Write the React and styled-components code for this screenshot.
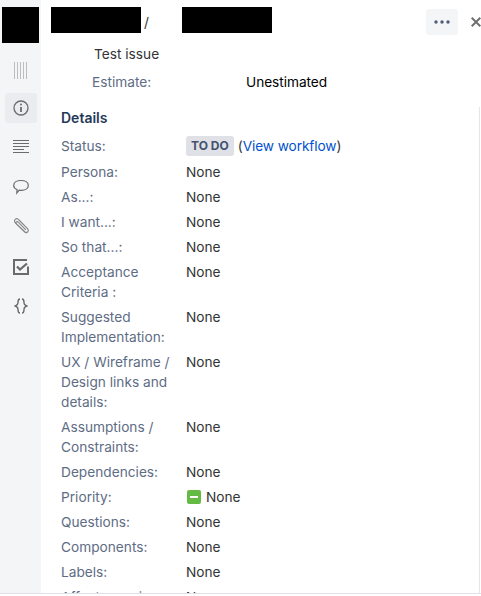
import React from 'react'
import styled, { createGlobalStyle } from 'styled-components'

const Global = createGlobalStyle`
html, body { margin: 0; padding: 0; background: #fff; overflow: hidden; }
body { font-family: Inter, "Liberation Sans", sans-serif; font-size: 13.7px; line-height: 20px; color: #333; }
`

const Frame = styled.div`
display: flex;
width: 481px;
height: 593px;
border-bottom: 1px solid #dfe1e6;
overflow: hidden;
`

const Rail = styled.nav`
width: 41px;
flex: none;
background: #f4f5f7;
display: flex;
flex-direction: column;
align-items: center;
padding-top: 7px;
`

const Logo = styled.div`
width: 37px;
height: 36px;
background: #000;
margin-bottom: 12px;
`

const RailIcon = styled.div`
width: 32px;
height: 30px;
margin-bottom: ${props => props.$gap || 10}px;
border-radius: 3px;
display: flex;
align-items: center;
justify-content: center;
color: #6b6b6b;
background: ${props => props.$active ? '#ebecf0' : 'transparent'};
`

const Main = styled.main`
flex: 1;
min-width: 0;
display: flex;
flex-direction: column;
`

const Header = styled.header`
display: flex;
align-items: flex-start;
padding: 7px 0 0 10px;
height: 37px;
box-sizing: border-box;
flex: none;
`

const Redacted = styled.div`
width: 90px;
height: 26px;
background: #000;
`

const Slash = styled.span`
width: 41px;
padding: 5px 0 0 3px;
box-sizing: border-box;
color: #333;
`

const Actions = styled.div`
margin-left: auto;
display: flex;
align-items: center;
gap: 13px;
margin-top: 2px;
`

const MoreButton = styled.button`
width: 32px;
height: 26px;
border: 0;
padding: 0;
border-radius: 3px;
background: #f4f5f7;
color: #505f79;
display: flex;
align-items: center;
justify-content: center;
`

const CloseButton = styled.button`
width: 10px;
height: 14px;
border: 0;
padding: 0;
background: none;
color: #707070;
display: flex;
align-items: center;
`

const Summary = styled.div`
margin: 7px 0 0 53px;
color: #333;
`

const EstimateRow = styled.div`
display: flex;
margin: 8px 0 0 51px;
`

const EstimateLabel = styled.span`
width: 154px;
color: #5e6c84;
`

const EstimateValue = styled.span`
color: #000;
letter-spacing: -0.05px;
`

const Panel = styled.section`
flex: 1;
min-height: 0;
margin: 15px 1px 0 0;
padding: 1px 0 0 20px;
border-right: 1px solid #e4e6ea;
overflow: hidden;
`

const Heading = styled.h3`
margin: 0 0 8px;
font-size: 14px;
line-height: 20px;
font-weight: 600;
color: #253858;
`

const Row = styled.div`
display: flex;
margin-bottom: ${props => props.$gap ?? 5}px;
`

const Label = styled.div`
width: 125px;
flex: none;
padding-right: 10px;
box-sizing: border-box;
color: #5e6c84;
`

const Value = styled.div`
display: flex;
align-items: center;
align-self: flex-start;
color: #333;
`

const Lozenge = styled.span`
background: #dfe1e6;
color: #42526e;
font-size: 12px;
font-weight: 700;
line-height: 16px;
padding: 2px 5px;
border-radius: 3px;
margin-right: 4px;
`

const Link = styled.a`
color: #0052cc;
text-decoration: none;
letter-spacing: -0.1px;
`

const PriorityIcon = styled.span`
width: 14px;
height: 14px;
border-radius: 2px;
background: #65ba43;
margin: 0 5px 0 1px;
display: flex;
align-items: center;
justify-content: center;
&::after {
    content: '';
    width: 8px;
    height: 2px;
    background: #fff;
}
`

const fields = [
    'Persona:', 'As...:', 'I want...:', 'So that...:', 'Acceptance Criteria :',
    'Suggested Implementation:', 'UX / Wireframe / Design links and details:',
    'Assumptions / Constraints:', 'Dependencies:',
]

const moreFields = ['Questions:', 'Components:', 'Labels:', 'Affects versions:']

const App = () => (
    <>
        <Global />
        <Frame>
            <Rail>
                <Logo />
                <RailIcon $gap={8}>
                    <svg width="14" height="17" viewBox="0 0 14 17" fill="none" stroke="#bdbdbd" strokeWidth="1">
                        <path d="M.5 0v17M3.500 0v17M6.500 0v17M9.500 0v17M12.500 0v17" />
                    </svg>
                </RailIcon>
                <RailIcon $active $gap={9}>
                    <svg width="16" height="16" viewBox="0 0 16 16" fill="none" stroke="currentColor">
                        <circle cx="8" cy="8" r="7" strokeWidth="1.3" />
                        <path d="M8 7v5" strokeWidth="1.800" />
                        <circle cx="8" cy="4.600" r="1" fill="currentColor" stroke="none" />
                    </svg>
                </RailIcon>
                <RailIcon $gap={10}>
                    <svg width="16" height="14" viewBox="0 0 16 14" stroke="currentColor" strokeWidth="1">
                        <path d="M0 .5h16M0 3.500h16M0 6.500h16M0 9.500h11M0 12.500h16" />
                    </svg>
                </RailIcon>
                <RailIcon $gap={9}>
                    <svg width="16" height="16" viewBox="0 0 16 16" fill="none" stroke="currentColor" strokeWidth="1.200">
                        <path d="M8 1.500c4 0 7.300 1.800 7.300 5S12 11.300 8.500 11.300c-1 0-1.600 0-2.200-.2L3.800 14l.3-3.500C2 9.700.7 8.300.7 6.500c0-3.200 3.300-5 7.300-5z" />
                    </svg>
                </RailIcon>
                <RailIcon $gap={11}>
                    <svg width="17" height="17" viewBox="0 0 17 17" fill="none" stroke="currentColor" strokeWidth="1.100" opacity=".8">
                        <path d="M13.500 14.500L3.500 5C2 3.500 2.500 2 3.300 1.300 4.300.4 5.700.6 7 2l8.500 8.700c1 1.200.8 2.500 0 3.300-.9.900-2.200.800-3.300-.3L4.500 6c-.7-.8-.6-1.500-.1-2s1.200-.5 1.900.2l7.500 7.600" />
                    </svg>
                </RailIcon>
                <RailIcon $gap={9}>
                    <svg width="16" height="16" viewBox="0 0 16 16" fill="none">
                        <path d="M14 1H1v14h14V7.500" stroke="currentColor" strokeWidth="2" />
                        <path d="M4 7.500l3 3 7-6" stroke="currentColor" strokeWidth="2.300" />
                    </svg>
                </RailIcon>
                <RailIcon>
                    <svg width="16" height="16" viewBox="0 0 16 16" fill="none" stroke="currentColor" strokeWidth="1.400">
                        <path d="M7 1C5 1 5 2.500 5 4.500S4.500 7.500 1.500 8C4.500 8.500 5 9.500 5 11.500S5 15 7 15" />
                        <path d="M9 1c2 0 2 1.500 2 3.500s.5 3 3.500 3.500c-3 .5-3.500 1.500-3.500 3.500S11 15 9 15" />
                    </svg>
                </RailIcon>
            </Rail>
            <Main>
                <Header>
                    <Redacted />
                    <Slash>/</Slash>
                    <Redacted />
                    <Actions>
                        <MoreButton aria-label="More">
                            <svg width="16" height="4" viewBox="0 0 16 4" fill="currentColor">
                                <circle cx="2" cy="2" r="1.700" />
                                <circle cx="8" cy="2" r="1.700" />
                                <circle cx="14" cy="2" r="1.700" />
                            </svg>
                        </MoreButton>
                        <CloseButton aria-label="Close">
                            <svg width="10" height="10" viewBox="0 0 10 10" fill="none" stroke="currentColor" strokeWidth="2">
                                <path d="M.7.700l8.600 8.600M9.300.700L.7 9.300" />
                            </svg>
                        </CloseButton>
                    </Actions>
                </Header>
                <Summary>Test issue</Summary>
                <EstimateRow>
                    <EstimateLabel>Estimate:</EstimateLabel>
                    <EstimateValue>Unestimated</EstimateValue>
                </EstimateRow>
                <Panel>
                    <Heading>Details</Heading>
                    <Row $gap={6}>
                        <Label>Status:</Label>
                        <Value>
                            <Lozenge>TO DO</Lozenge>
                            <span>(<Link href="#">View workflow</Link>)</span>
                        </Value>
                    </Row>
                    {fields.map(name => (
                        <Row key={name}>
                            <Label>{name}</Label>
                            <Value>None</Value>
                        </Row>
                    ))}
                    <Row>
                        <Label>Priority:</Label>
                        <Value><PriorityIcon />None</Value>
                    </Row>
                    {moreFields.map(name => (
                        <Row key={name}>
                            <Label>{name}</Label>
                            <Value>None</Value>
                        </Row>
                    ))}
                </Panel>
            </Main>
        </Frame>
    </>
)

export default App
